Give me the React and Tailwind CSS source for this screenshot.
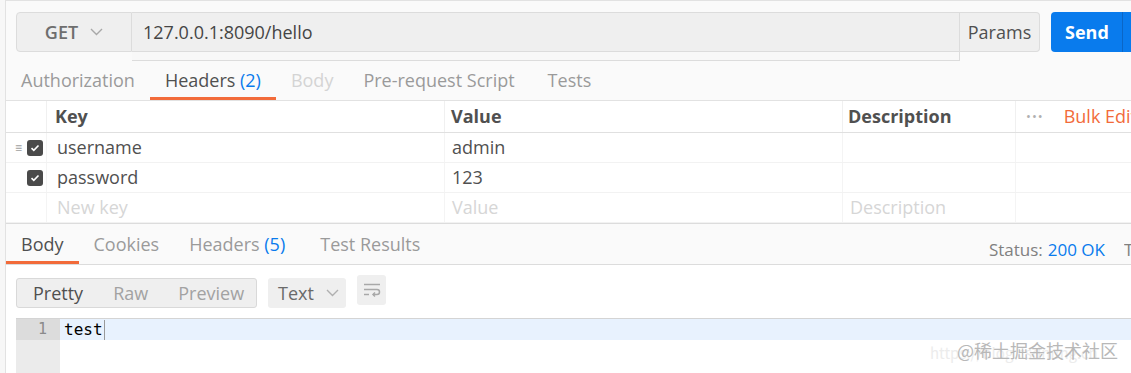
import { useState } from 'react';

const FONT = { fontFamily: '"Open Sans", "Noto Sans", sans-serif' };

function Chevron({ className = '' }) {
  return (
    <svg className={className} width="13" height="8" viewBox="0 0 13 8" fill="none" stroke="currentColor" strokeWidth="1.4">
      <path d="M1 1l5.5 5.5L12 1" />
    </svg>
  );
}

function CheckBox() {
  return (
    <div className="w-[16px] h-[16px] rounded-[3px] bg-[#4a4a4a] flex items-center justify-center">
      <svg width="10" height="8" viewBox="0 0 10 8" fill="none" stroke="#fff" strokeWidth="1.6">
        <path d="M1.5 4.2l2.3 2.2L8.5 1.5" />
      </svg>
    </div>
  );
}

function Tab({ label, count, active, muted }) {
  return (
    <div className="relative px-[15px] flex items-center h-full">
      <span className={active ? 'text-[#505050]' : muted ? 'text-[#d4d4d4]' : 'text-[#9a9a9a]'}>
        {label}
        {count && <span className="text-[#097bed]"> ({count})</span>}
      </span>
      {active && <div className="absolute left-0 right-0 bottom-0 h-[3px] bg-[#f26b3a]" />}
    </div>
  );
}

function Row({ k, v, desc, handle, checked, placeholder }) {
  const tone = placeholder ? 'text-[#d6d6d6]' : 'text-[#505050]';
  return (
    <div className="flex h-[30px] border-b border-[#f2f2f2]">
      <div className="w-[40px] shrink-0 flex items-center justify-end pr-[3px] gap-[5px]">
        {handle && <span className="text-[#a0a0a0] text-[12px] leading-none">≡</span>}
        {checked && <CheckBox />}
      </div>
      <div className={`w-[398px] shrink-0 pl-[10px] flex items-center border-l border-[#f4f4f4] ${tone}`}>{k}</div>
      <div className={`w-[398px] shrink-0 pl-[7px] flex items-center border-l border-[#f4f4f4] ${tone}`}>{v}</div>
      <div className={`w-[173px] shrink-0 pl-[7px] flex items-center border-l border-[#f4f4f4] ${tone}`}>{desc}</div>
      <div className="flex-1 border-l border-[#f4f4f4]" />
    </div>
  );
}

export default function App() {
  const [mode] = useState('Pretty');

  return (
    <div className="w-[1131px] h-[373px] overflow-hidden bg-[#f7f7f7] relative text-[18px]" style={FONT}>
      <div className="h-full ml-[5px] border-l border-[#e2e2e2] border-t bg-[#fafafa] flex flex-col">
        {/* request bar */}
        <div className="shrink-0 flex items-start h-[40px] mt-[11px] pl-[10px]">
          <div className="w-[116px] h-[40px] flex items-center justify-center gap-[12px] bg-[#efefef] border border-[#dcdcdc] rounded-l-[4px] text-[#6e6e6e] font-semibold">
            <span>GET</span>
            <Chevron className="text-[#a8a8a8]" />
          </div>
          <div className="w-[828px] h-[49px] border-r border-b border-[#dcdcdc] flex flex-col bg-[#f8f8f8]">
            <div className="h-[40px] bg-[#efefef] border-y border-[#dcdcdc] flex items-center pl-[11px] text-[#454545]">127.0.0.1:8090/hello</div>
          </div>
          <div className="w-[80px] h-[40px] bg-[#efefef] border border-l-0 border-[#dcdcdc] rounded-r-[4px] flex items-center justify-center text-[#505050]">Params</div>
          <div className="ml-[11px] h-[40px] flex-1 bg-[#097bed] rounded-l-[4px] flex items-center">
            <span className="pl-[14px] pr-[13px] font-bold text-white">Send</span>
            <div className="h-full w-px bg-[#0a66c6]" />
          </div>
        </div>

        {/* request tabs */}
        <div className="shrink-0 flex h-[41px] mt-[8px] border-b border-[#e2e2e2]">
          <Tab label="Authorization" />
          <Tab label="Headers" count="2" active />
          <Tab label="Body" muted />
          <Tab label="Pre-request Script" />
          <div className="pl-[3px] h-full"><Tab label="Tests" /></div>
        </div>

        {/* headers table */}
        <div className="shrink-0 bg-white border-b border-[#dcdcdc]">
          <div className="flex h-[32px] border-b border-[#e0e0e0] font-bold text-[#505050]">
            <div className="w-[40px] shrink-0" />
            <div className="w-[398px] shrink-0 pl-[8px] flex items-center border-l border-[#f0f0f0]">Key</div>
            <div className="w-[398px] shrink-0 pl-[6px] flex items-center border-l border-[#f0f0f0]">Value</div>
            <div className="w-[173px] shrink-0 pl-[5px] flex items-center border-l border-[#f0f0f0]">Description</div>
            <div className="flex-1 min-w-0 overflow-hidden flex items-center border-l border-[#f0f0f0] font-normal whitespace-nowrap">
              <span className="pl-[10px] text-[#b0b0b0] text-[13px] tracking-[1px]">•••</span>
              <span className="pl-[20px] text-[#f26b3a]">Bulk Edit</span>
            </div>
          </div>
          <Row k="username" v="admin" handle checked />
          <Row k="password" v="123" checked />
          <Row k="New key" v="Value" desc="Description" placeholder />
        </div>

        {/* response tabs */}
        <div className="shrink-0 flex h-[41px] border-b border-[#dcdcdc]">
          <Tab label="Body" active />
          <Tab label="Cookies" />
          <Tab label="Headers" count="5" />
          <div className="pl-[5px] h-full"><Tab label="Test Results" /></div>
          <div className="flex-1 flex items-end justify-end pb-[2px] text-[17px] whitespace-nowrap">
            <span className="text-[#808080]">Status:</span>
            <span className="text-[#097bed] ml-[5px]">200 OK</span>
            <span className="text-[#808080] ml-[19px] w-[7px] overflow-hidden">Time</span>
          </div>
        </div>

        {/* response body */}
        <div className="flex-1 shrink-0 bg-white pl-[10px]">
          <div className="flex items-start gap-[11px] mt-[13px]">
            <div className="h-[30px] flex items-center bg-[#efefef] border border-[#d9d9d9] rounded-[3px] pl-[1px] w-[241px]">
              {['Pretty', 'Raw', 'Preview'].map(m => (
                <span key={m} className={`px-[15px] ${m === mode ? 'text-[#505050]' : 'text-[#a2a2a2]'}`}>{m}</span>
              ))}
            </div>
            <div className="h-[30px] w-[78px] flex items-center gap-[12px] pl-[10px] bg-[#efefef] rounded-[3px] text-[#6a6a6a]">
              <span>Text</span>
              <Chevron className="text-[#b0b0b0]" />
            </div>
            <div className="h-[30px] w-[29px] mt-[-3px] bg-[#efefef] rounded-[3px] flex items-center justify-center">
              <svg width="20" height="16" viewBox="0 0 20 16" fill="none" stroke="#a8a8a8" strokeWidth="1.5">
                <path d="M2 2.5h16" />
                <path d="M2 7.5h13a2.5 2.5 0 0 1 0 5H11" />
                <path d="M13 10.5l-2 2 2 2" />
                <path d="M2 12.5h5" />
              </svg>
            </div>
          </div>

          {/* editor */}
          <div className="mt-[10px] border-t border-[#d4d4d4] flex h-[60px]" style={{ fontFamily: '"DejaVu Sans Mono", monospace' }}>
            <div className="w-[44px] bg-[#ebebeb]">
              <div className="h-[21px] bg-[#dcdcdc] text-[#8a8a8a] text-[15px] flex items-center justify-end pr-[13px]">1</div>
            </div>
            <div className="flex-1">
              <div className="h-[21px] bg-[#e8f2fe] flex items-center pl-[4px] text-[16px] text-black">
                test<span className="inline-block w-px h-[20px] bg-[#999] ml-[1px]" />
              </div>
            </div>
          </div>
        </div>
      </div>

      {/* watermark */}
      <div className="absolute left-[930px] top-[337px] text-[18px] text-[#b8b8b8] whitespace-nowrap" style={{ fontFamily: '"Noto Sans CJK SC", "Noto Sans", sans-serif' }}>
        <span className="absolute left-0 top-[5px] text-[15px] text-[#ececec]">https://blog.csdnimg.cn</span>
        <span className="relative pl-[27px]">@稀土掘金技术社区</span>
      </div>
    </div>
  );
}
